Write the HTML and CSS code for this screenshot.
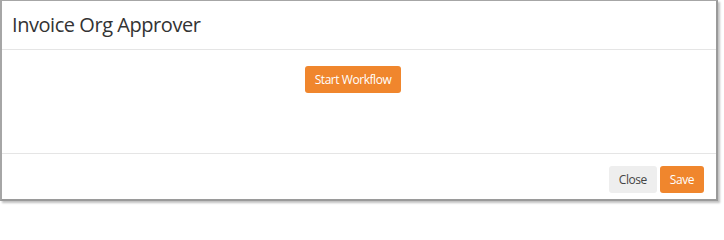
FILE: index.html
```html
<!DOCTYPE html>
<html>
<head>
<meta charset="utf-8">
<link rel="stylesheet" href="styles.css">
</head>
<body>
<div class="frame">
  <div class="modal">
    <div class="modal-header">
      <h1 class="title">Invoice Org Approver</h1>
    </div>
    <div class="modal-body">
      <button class="btn btn-primary">Start Workflow</button>
    </div>
    <div class="modal-footer">
      <button class="btn btn-default">Close</button>
      <button class="btn btn-primary">Save</button>
    </div>
  </div>
</div>
</body>
</html>
```

FILE: styles.css
```css
html, body {
  margin: 0;
  padding: 0;
  background: #ffffff;
}
body {
  font-family: "Open Sans", "Noto Sans", sans-serif;
  width: 724px;
  height: 208px;
  overflow: hidden;
}
.frame {
  box-sizing: border-box;
  width: 718px;
  height: 201px;
  border-left: 2px solid #a6a6a6;
  border-top: 1px solid #a6a6a6;
  border-right: 2px solid #9a9a9a;
  border-bottom: 2px solid #9a9a9a;
  box-shadow: 2px 2px 2px rgba(0, 0, 0, 0.25);
  background: #fff;
}
.modal {
  display: flex;
  flex-direction: column;
  height: 100%;
}
.modal-header {
  box-sizing: border-box;
  height: 49px;
  flex: none;
  border-bottom: 1px solid #e5e5e5;
  display: flex;
  align-items: center;
  padding: 0 10px 1px 10px;
}
.title {
  margin: 0;
  font-size: 20px;
  font-weight: 400;
  color: #333;
  line-height: 24px;
  letter-spacing: -0.45px;
}
.modal-body {
  flex: 1;
  display: flex;
  justify-content: center;
  align-items: flex-start;
  padding: 16px 12px 0 0;
}
.modal-footer {
  flex: none;
  border-top: 1px solid #e5e5e5;
  display: flex;
  justify-content: flex-end;
  gap: 3px;
  padding: 12px 12px 6px 12px;
}
.btn {
  font-family: "Open Sans", "Noto Sans", sans-serif;
  font-size: 12px;
  letter-spacing: -0.45px;
  height: 27px;
  padding: 0 10px;
  border: none;
  border-radius: 3px;
  line-height: 27px;
  cursor: pointer;
}
.btn-primary {
  background: #f0862d;
  color: #fff;
}
.btn-default {
  background: #eeeeee;
  color: #444;
}
```
